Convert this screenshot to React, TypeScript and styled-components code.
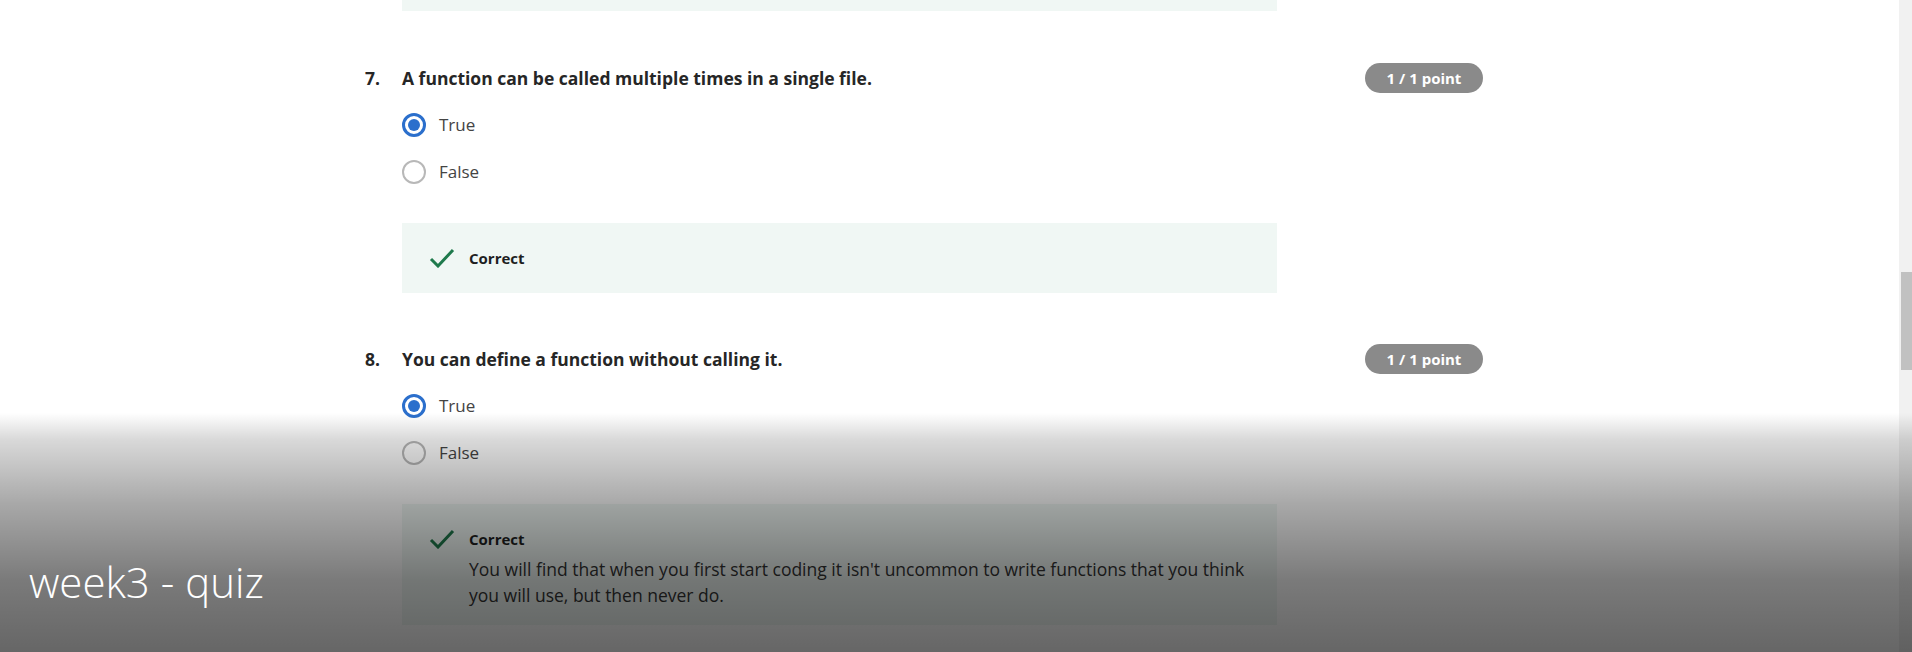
import React from 'react';
import styled, { createGlobalStyle } from 'styled-components';

const GlobalStyle = createGlobalStyle`
  html, body {
    margin: 0;
    padding: 0;
    background: #ffffff;
  }
  body {
    font-family: "Open Sans", "Liberation Sans", sans-serif;
  }
`

const Frame = styled.div`
  position: relative;
  width: 1912px;
  height: 652px;
  overflow: hidden;
  display: flex;
  background: #ffffff;
`

const Main = styled.main`
  flex: 1;
  padding-left: 365px;
`

const PrevFeedbackTail = styled.div`
  margin-left: 37px;
  width: 875px;
  height: 11px;
  background: #f0f7f4;
`

const Question = styled.section<{ $first?: boolean }>`
  display: grid;
  grid-template-columns: 37px 875px 88px 118px;
  margin-top: ${({ $first }) => ($first ? '52px' : '51px')};
`

const Number = styled.div`
  grid-column: 1;
  height: 30px;
  display: flex;
  align-items: center;
  font-size: 17.5px;
  font-weight: 700;
  color: #262626;
`

const Title = styled.h3`
  grid-column: 2;
  margin: 0;
  height: 30px;
  display: flex;
  align-items: center;
  font-size: 17.5px;
  font-weight: 700;
  color: #262626;
`

const Badge = styled.div`
  grid-column: 4;
  height: 30px;
  border-radius: 15px;
  background: #8a8a8a;
  color: #ffffff;
  font-size: 15px;
  font-weight: 700;
  display: flex;
  align-items: center;
  justify-content: center;
`

const Options = styled.div`
  grid-column: 2;
  padding-top: 8px;
  display: flex;
  flex-direction: column;
`

const Option = styled.label`
  height: 47px;
  display: flex;
  align-items: center;
  gap: 13px;
  font-size: 17px;
  color: #444444;
`

const Radio = styled.span<{ $checked?: boolean }>`
  box-sizing: border-box;
  width: 24px;
  height: 24px;
  border-radius: 50%;
  border: ${({ $checked }) => ($checked ? '3px solid #2b6fcc' : '2px solid #b8b8b8')};
  display: flex;
  align-items: center;
  justify-content: center;

  &::after {
    content: '';
    width: 12px;
    height: 12px;
    border-radius: 50%;
    background: ${({ $checked }) => ($checked ? '#2b6fcc' : 'transparent')};
  }
`

const Feedback = styled.div`
  grid-column: 2;
  margin-top: 28px;
  background: #f0f7f4;
  padding: 24px 27px;
  display: flex;
  gap: 14px;
`

const CheckIcon = styled.svg`
  flex: none;
  width: 26px;
  height: 20px;
  margin-top: 1px;
`

const FeedbackBody = styled.div`
  display: flex;
  flex-direction: column;
`

const FeedbackLabel = styled.div`
  font-size: 15px;
  line-height: 22px;
  font-weight: 700;
  color: #1f1f1f;
`

const Explanation = styled.p`
  margin: 6px 0 -7px;
  font-size: 17.5px;
  line-height: 26px;
  color: #333333;
  max-width: 800px;
`

const ScrollTrack = styled.div`
  width: 13px;
  background: #f1f1f1;
  display: flex;
  justify-content: flex-end;
  padding-top: 272px;
  box-sizing: border-box;
`

const ScrollThumb = styled.div`
  width: 11px;
  height: 98px;
  background: #c1c1c1;
`

const VideoShade = styled.div`
  position: absolute;
  left: 0;
  right: 0;
  bottom: 0;
  height: 239px;
  display: flex;
  align-items: flex-end;
  padding: 0 0 48px 29px;
  box-sizing: border-box;
  background: linear-gradient(
    to bottom,
    rgba(0, 0, 0, 0) 0%,
    rgba(0, 0, 0, 0.15) 11%,
    rgba(0, 0, 0, 0.34) 38%,
    rgba(0, 0, 0, 0.52) 70%,
    rgba(0, 0, 0, 0.6) 100%
  );
  pointer-events: none;
`

const VideoTitle = styled.div`
  font-family: "Open Sans", "Liberation Sans", sans-serif;
  font-weight: 300;
  font-size: 42px;
  line-height: 44px;
  color: #ffffff;
`

interface QuizItem {
    number: number;
    title: string;
    answer: 'True' | 'False';
    explanation?: string;
}

const items: QuizItem[] = [
    { number: 7, title: 'A function can be called multiple times in a single file.', answer: 'True' },
    {
        number: 8,
        title: 'You can define a function without calling it.',
        answer: 'True',
        explanation: "You will find that when you first start coding it isn't uncommon to write functions that you think you will use, but then never do.",
    },
];

const Check = () => (
    <CheckIcon viewBox="0 0 26 20">
        <polyline points="2,11 9,18 24,2" fill="none" stroke="#1f7a4c" strokeWidth="3" />
    </CheckIcon>
);

const App = () => {
    return (
        <Frame>
            <GlobalStyle />
            <Main>
                <PrevFeedbackTail />
                {items.map((item, i) => (
                    <Question key={item.number} $first={i === 0}>
                        <Number>{item.number}.</Number>
                        <Title>{item.title}</Title>
                        <Badge>1 / 1 point</Badge>
                        <Options>
                            {(['True', 'False'] as const).map(opt => (
                                <Option key={opt}>
                                    <Radio $checked={opt === item.answer} />
                                    {opt}
                                </Option>
                            ))}
                        </Options>
                        <Feedback>
                            <Check />
                            <FeedbackBody>
                                <FeedbackLabel>Correct</FeedbackLabel>
                                {item.explanation && <Explanation>{item.explanation}</Explanation>}
                            </FeedbackBody>
                        </Feedback>
                    </Question>
                ))}
            </Main>
            <ScrollTrack>
                <ScrollThumb />
            </ScrollTrack>
            <VideoShade>
                <VideoTitle>week3 - quiz</VideoTitle>
            </VideoShade>
        </Frame>
    );
};

export default App;
